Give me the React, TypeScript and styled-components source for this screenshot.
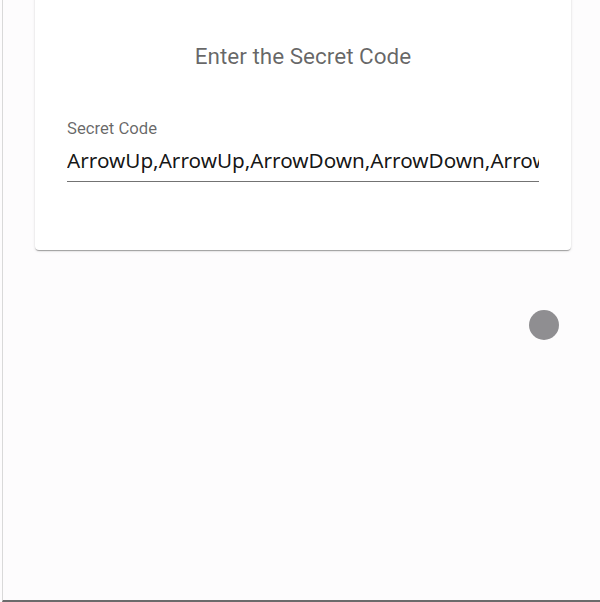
import React from "react";
import styled, { createGlobalStyle } from "styled-components";

const Global = createGlobalStyle`
  html, body { margin: 0; padding: 0; background: #fdfcfd; }
  body { font-family: Roboto, "Noto Sans", sans-serif; overflow: hidden; }
`;

const Frame = styled.div`
  box-sizing: border-box;
  height: 602px;
  margin-left: 2px;
  width: 598px;
  border-left: 1px solid #d9d9d9;
  border-bottom: 2px solid #6b6b6b;
  display: flex;
  flex-direction: column;
  overflow: hidden;
`;

const Card = styled.div`
  box-sizing: border-box;
  margin: -10px 29px 0 32px;
  background: #ffffff;
  border-radius: 4px;
  box-shadow: 0 2px 1px -1px rgba(0,0,0,0.2), 0 1px 1px 0 rgba(0,0,0,0.14), 0 1px 3px 0 rgba(0,0,0,0.12);
  padding: 50px 32px 68px;
  display: flex;
  flex-direction: column;
`;

const Title = styled.h2`
  margin: 0;
  text-align: center;
  font-weight: 400;
  font-size: 22.5px;
  line-height: 32px;
  color: rgba(0,0,0,0.6);
`;

const Field = styled.div`
  margin-top: 47px;
  display: flex;
  flex-direction: column;
`;

const Label = styled.label`
  font-size: 16.7px;
  line-height: 20px;
  color: rgba(0,0,0,0.6);
`;

const Input = styled.input`
  border: none;
  outline: none;
  padding: 7px 0 7px;
  margin: 0;
  font-family: "Noto Sans", "Open Sans", sans-serif;
  font-size: 20.7px;
  line-height: 28px;
  color: rgba(0,0,0,0.92);
  background: transparent;
  border-bottom: 1px solid rgba(0,0,0,0.55);
  width: 100%;
`;

const DotRow = styled.div`
  display: flex;
  justify-content: flex-end;
  padding: 60px 41px 0 0;
`;

const Dot = styled.div`
  width: 30px;
  height: 30px;
  border-radius: 50%;
  background: #8f8e91;
`;

export default function App() {
  return (
    <>
      <Global />
      <Frame>
        <Card>
          <Title>Enter the Secret Code</Title>
          <Field>
            <Label htmlFor="code">Secret Code</Label>
            <Input
              id="code"
              readOnly
              value="ArrowUp,ArrowUp,ArrowDown,ArrowDown,ArrowLeft,ArrowRight,ArrowLeft,ArrowRight,b,a"
            />
          </Field>
        </Card>
        <DotRow>
          <Dot />
        </DotRow>
      </Frame>
    </>
  );
}
